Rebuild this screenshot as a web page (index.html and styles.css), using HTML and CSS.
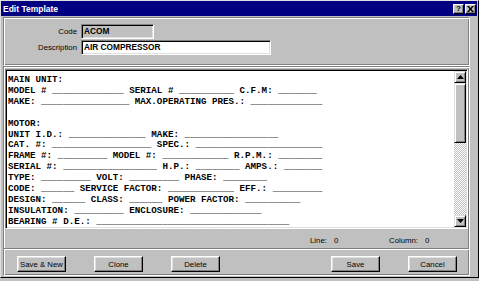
FILE: index.html
```html
<!DOCTYPE html>
<html lang="en">
<head>
    <meta charset="UTF-8">
    <title>Edit Template</title>
    <link rel="stylesheet" href="styles.css">
</head>
<body>
    <div class="window">
        <div class="titlebar">
            <span class="title">Edit Template</span>
            <div class="title-buttons">
                <span class="tbtn tbtn-help">?</span>
                <span class="tbtn">
                    <svg width="7" height="6" viewBox="0 0 7 6"><path d="M0 0h2l1.5 2 1.5-2h2l-2.5 3 2.5 3h-2l-1.5-2-1.5 2h-2l2.5-3z" fill="#000"/></svg>
                </span>
            </div>
        </div>

        <div class="client">
            <div class="panel header-panel">
                <label class="label">Code</label>
                <div class="field field-readonly">ACOM</div>
                <label class="label">Description</label>
                <div class="field field-desc">AIR COMPRESSOR</div>
            </div>

            <div class="panel body-panel">
                <div class="editor">
<pre class="editor-text">MAIN UNIT:
MODEL # _____________ SERIAL # __________ C.F.M: _______
MAKE: ________________ MAX.OPERATING PRES.: _____________

MOTOR:
UNIT I.D.: ______________ MAKE: _________________
CAT. #: __________________ SPEC.: _______________________
FRAME #: _________ MODEL #: ____________ R.P.M.: ________
SERIAL #: _________________ H.P.: ________ AMPS.: _______
TYPE: _________ VOLT: _________ PHASE: ________
CODE: ______ SERVICE FACTOR: ____________ EFF.: _________
DESIGN: ______ CLASS: ______ POWER FACTOR: __________
INSULATION: _________ ENCLOSURE: _____________
BEARING # D.E.: ___________________________________</pre>
                    <div class="scrollbar">
                        <div class="sb-btn">
                            <svg width="7" height="4" viewBox="0 0 7 4"><path d="M3.5 0L7 4H0z" fill="#000"/></svg>
                        </div>
                        <div class="sb-thumb"></div>
                        <div class="sb-track"></div>
                        <div class="sb-btn">
                            <svg width="7" height="4" viewBox="0 0 7 4"><path d="M0 0h7L3.5 4z" fill="#000"/></svg>
                        </div>
                    </div>
                </div>

                <div class="status">
                    <div class="stat"><span>Line:</span><span>0</span></div>
                    <div class="stat"><span>Column:</span><span>0</span></div>
                </div>

                <div class="separator"></div>

                <div class="buttons">
                    <button class="btn">Save &amp; New</button>
                    <button class="btn">Clone</button>
                    <button class="btn">Delete</button>
                    <button class="btn push">Save</button>
                    <button class="btn">Cancel</button>
                </div>
            </div>
        </div>
    </div>
</body>
</html>
```

FILE: styles.css
```css
body {
    margin: 0;
    background-color: #c0c0c0;
    font-family: "Liberation Sans", Arial, sans-serif;
}

.window {
    width: 479px;
    height: 278px;
    box-sizing: border-box;
    background-color: #c0c0c0;
    border: 1px solid;
    border-color: #dfdfdf #000 #000 #dfdfdf;
    padding: 0 1px 0 0;
}

.titlebar {
    height: 15px;
    background-color: #000080;
    color: #fff;
    display: flex;
    align-items: center;
    padding: 0 1px 0 2px;
}

.title {
    font-weight: bold;
    font-size: 8.5px;
}

.title-buttons {
    margin-left: auto;
    display: flex;
    gap: 1px;
}

.tbtn {
    width: 11px;
    height: 10px;
    box-sizing: border-box;
    background-color: #c0c0c0;
    border: 1px solid;
    border-color: #fff #000 #000 #fff;
    box-shadow: inset -1px -1px 0 #808080;
    display: flex;
    align-items: center;
    justify-content: center;
}

.tbtn-help {
    color: #000;
    font-weight: bold;
    font-size: 8px;
    line-height: 1;
}

.client {
    padding: 1px 7px 1px 2px;
}

/* etched group box */
.panel {
    border: 1px solid;
    border-color: #808080 #fff #fff #808080;
    box-shadow: inset 1px 1px 0 #fff, inset -1px -1px 0 #808080;
}

.header-panel {
    padding: 6px 0 10px;
    display: grid;
    grid-template-columns: 73px auto;
    column-gap: 4px;
    row-gap: 1px;
    align-items: center;
    justify-content: start;
}

.label {
    text-align: right;
    font-size: 7.8px;
    color: #000;
}

.field {
    height: 15px;
    box-sizing: border-box;
    border: 1px solid;
    border-color: #808080 #fff #fff #808080;
    box-shadow: inset 1px 1px 0 #000, inset -1px -1px 0 #dfdfdf;
    padding: 0 2px;
    font-weight: bold;
    font-size: 8.3px;
    line-height: 13px;
    color: #000;
}

.field-readonly {
    width: 73px;
    background-color: #c0c0c0;
}

.field-desc {
    width: 190px;
    background-color: #fff;
}

.body-panel {
    padding: 2px 1px 0;
}

.editor {
    height: 160px;
    box-sizing: border-box;
    display: flex;
    background-color: #fff;
    border: 1px solid;
    border-color: #808080 #fff #fff #808080;
    box-shadow: inset 1px 1px 0 #000, inset -1px -1px 0 #dfdfdf;
}

.editor-text {
    flex: 1;
    margin: 0;
    padding: 5px 0 0 2px;
    overflow: hidden;
    font-family: "Liberation Mono", "Courier New", monospace;
    font-weight: bold;
    font-size: 9.2px;
    line-height: 10.9px;
    color: #000;
}

.scrollbar {
    width: 12px;
    margin: 1px 1px 1px 0;
    display: flex;
    flex-direction: column;
}

.sb-btn,
.sb-thumb {
    box-sizing: border-box;
    background-color: #c0c0c0;
    border: 1px solid;
    border-color: #dfdfdf #000 #000 #dfdfdf;
    box-shadow: inset 1px 1px 0 #fff, inset -1px -1px 0 #808080;
}

.sb-btn {
    height: 12px;
    display: flex;
    align-items: center;
    justify-content: center;
}

.sb-thumb {
    height: 60px;
}

.sb-track {
    flex: 1;
    background-image: repeating-conic-gradient(#fff 0 25%, #c0c0c0 0 50%);
    background-size: 2px 2px;
}

.status {
    height: 19px;
    box-sizing: border-box;
    display: flex;
    align-items: center;
    padding: 3px 0 0 305px;
    font-size: 7.8px;
    color: #000;
}

.stat {
    display: flex;
    gap: 7px;
    width: 92px;
}

.separator {
    margin: 0 -1px;
    border-top: 1px solid #808080;
    border-bottom: 1px solid #fff;
}

.buttons {
    display: flex;
    gap: 28px;
    padding: 6px 11px 3px 12px;
}

.btn {
    width: 49px;
    height: 16px;
    padding: 0;
    box-sizing: border-box;
    background-color: #c0c0c0;
    border: 1px solid;
    border-color: #fff #000 #000 #fff;
    box-shadow: inset -1px -1px 0 #808080, inset 1px 1px 0 #dfdfdf;
    font-family: "Liberation Sans", Arial, sans-serif;
    font-size: 7.8px;
    color: #000;
}

.push {
    margin-left: auto;
}
```
